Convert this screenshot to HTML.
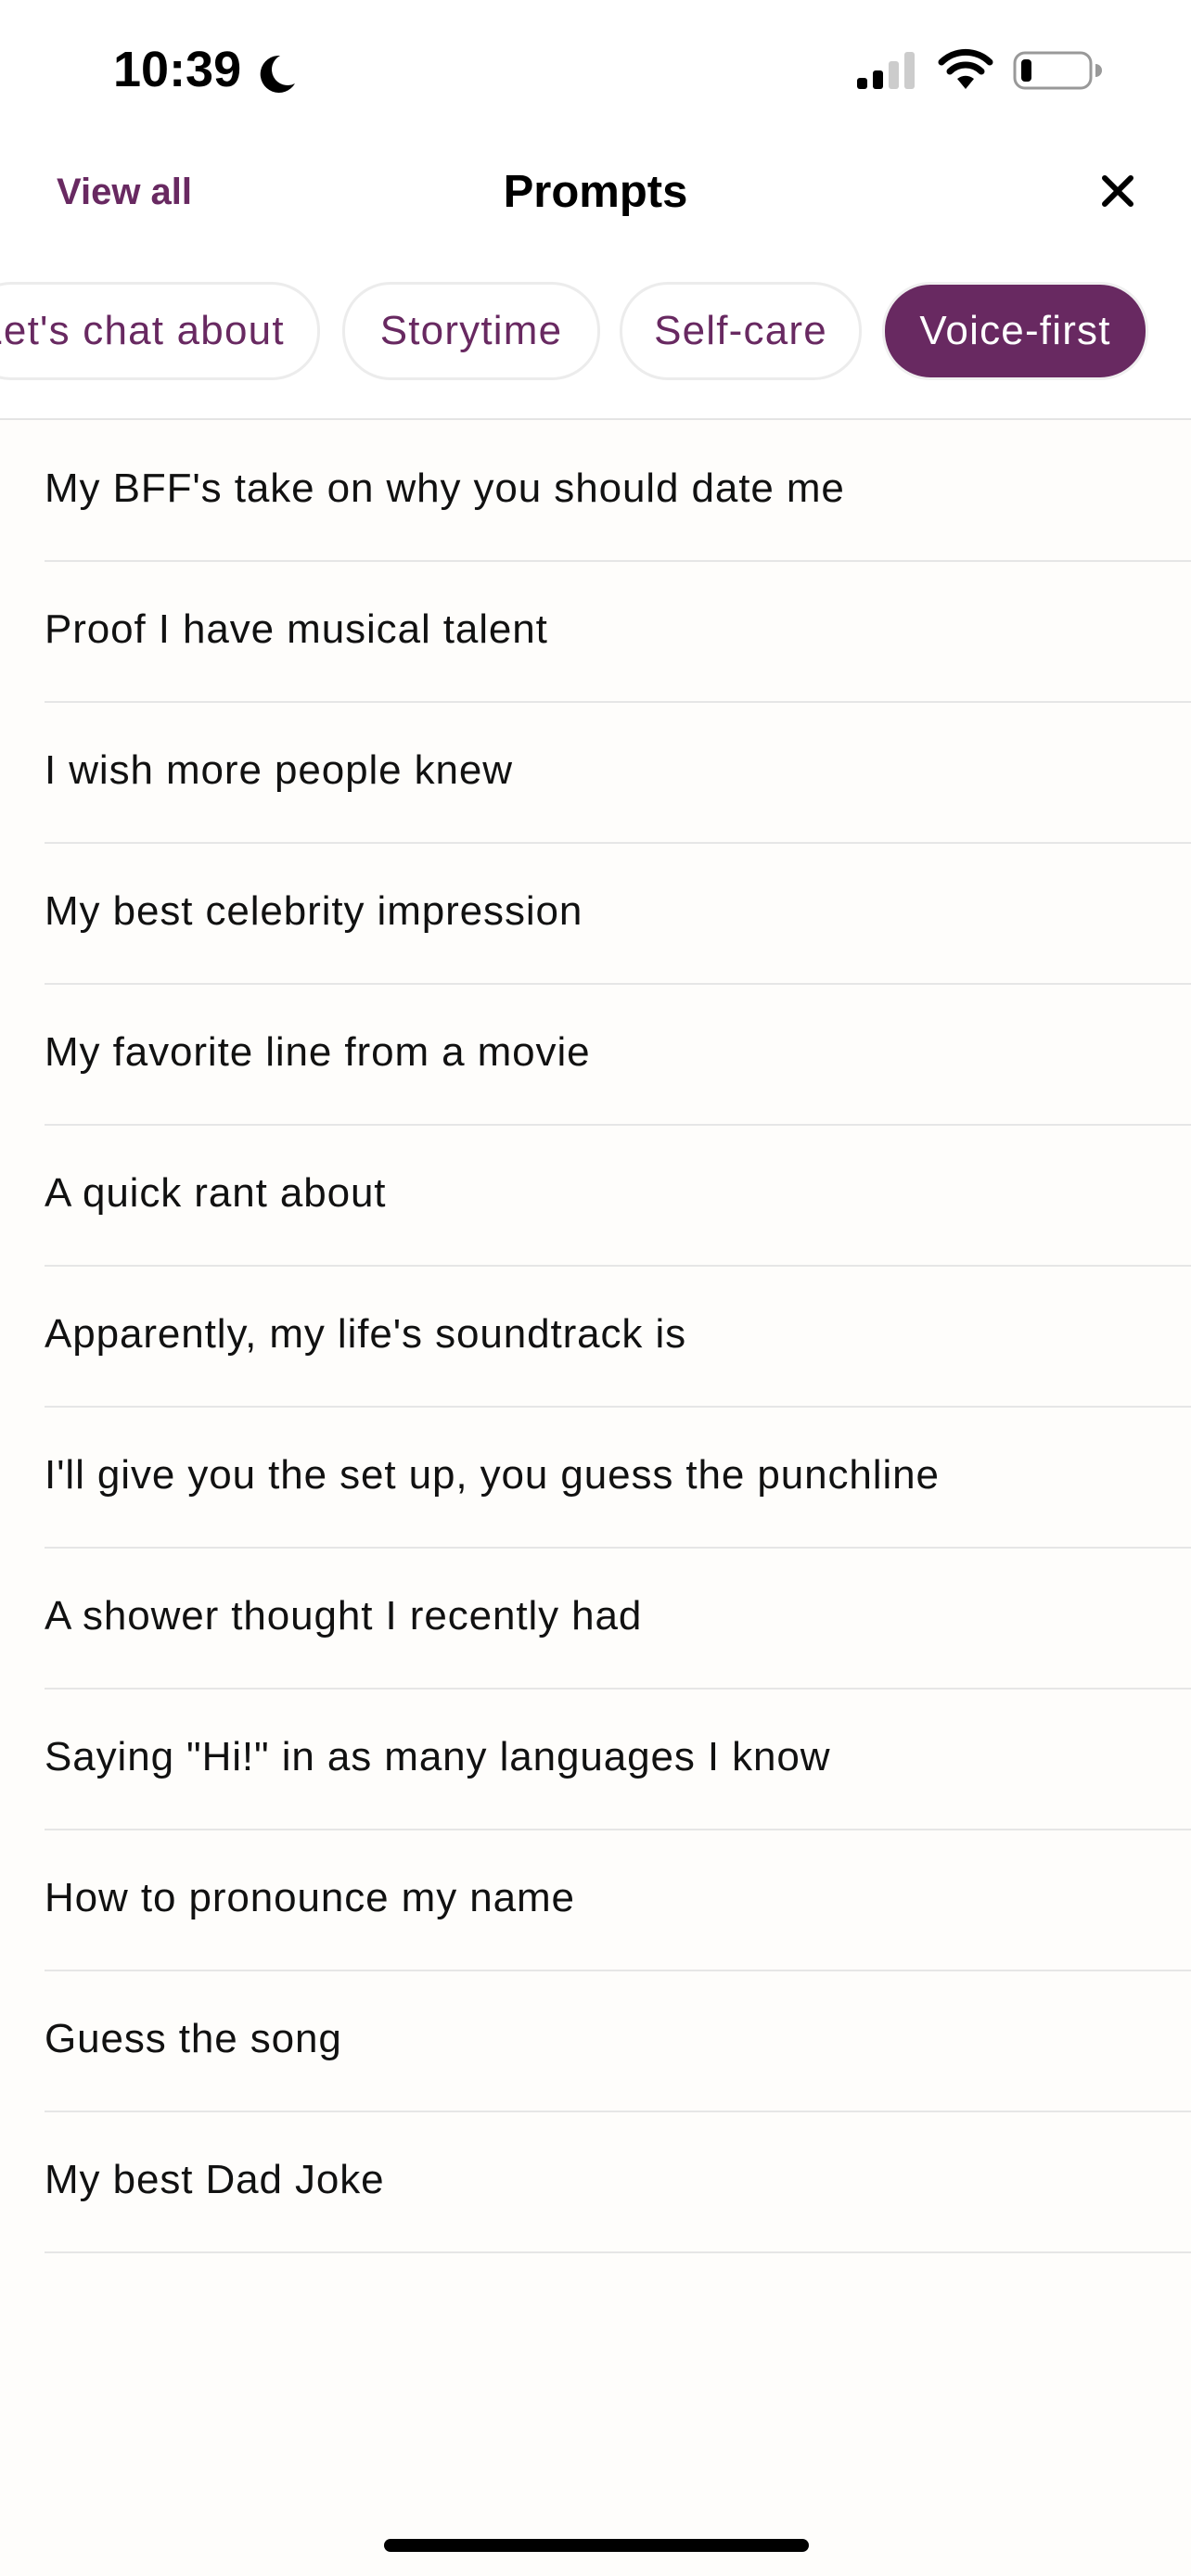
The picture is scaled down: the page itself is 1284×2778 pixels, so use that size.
<!DOCTYPE html>
<html><head><meta charset="utf-8"><style>
body{margin:0;width:1284px;height:2778px;background:#fefdfb;font-family:"Liberation Sans",sans-serif;position:relative;overflow:hidden}
.abs{position:absolute}
.chip{position:absolute;top:304px;height:100px;border:3px solid #ececec;border-radius:52px;background:#fff;color:#682961;font-size:44px;letter-spacing:1.2px;line-height:100px;text-align:center;box-sizing:content-box;white-space:nowrap}
.row{position:absolute;left:48px;right:0;height:152px;border-bottom:2px solid #e6e6e6;font-size:44px;letter-spacing:0.9px;line-height:150px;color:#111;white-space:nowrap}
</style></head><body>
<div class="abs" style="left:0;top:0;width:1284px;height:452px;background:#fff"></div>
<div class="abs" style="left:122px;top:44px;font-size:54px;font-weight:bold;color:#000">10:39</div>
<svg class="abs" style="left:274px;top:56px" width="48" height="48" viewBox="0 0 24 24"><path d="M14 2a10 10 0 1 0 8 15A8 8 0 0 1 14 2z" fill="#000"/></svg>
<svg class="abs" style="left:922px;top:54px" width="70" height="44" viewBox="0 0 70 44"><rect x="2" y="30" width="11" height="12" rx="3" fill="#000"/><rect x="19" y="22" width="11" height="20" rx="3" fill="#000"/><rect x="36" y="12" width="11" height="30" rx="3" fill="#ccc"/><rect x="53" y="2" width="11" height="40" rx="3" fill="#ccc"/></svg>
<svg class="abs" style="left:1010px;top:52px" width="62" height="46" viewBox="0 0 62 46"><path d="M31 44 L22 33 A14 14 0 0 1 40 33 Z" fill="#000"/><path d="M14 25 A24 24 0 0 1 48 25" stroke="#000" stroke-width="7" fill="none" stroke-linecap="round"/><path d="M5 15 A37 37 0 0 1 57 15" stroke="#000" stroke-width="7" fill="none" stroke-linecap="round"/></svg>
<svg class="abs" style="left:1092px;top:54px" width="96" height="44" viewBox="0 0 96 44"><rect x="2" y="3" width="82" height="38" rx="11" fill="none" stroke="#999" stroke-width="3"/><rect x="9" y="10" width="11" height="24" rx="4" fill="#000"/><path d="M89 15 a5 5 0 0 1 0 14z" fill="#999"/></svg>
<div class="abs" style="left:61px;top:185px;font-size:40px;font-weight:bold;color:#682961">View all</div>
<div class="abs" style="left:0;width:1284px;top:179px;text-align:center;font-size:49px;font-weight:bold;color:#000">Prompts</div>
<svg class="abs" style="left:1187px;top:188px" width="36" height="36" viewBox="0 0 36 36"><path d="M4 4L32 32M32 4L4 32" stroke="#000" stroke-width="6" stroke-linecap="round"/></svg>
<div class="chip" style="left:-40px;width:379px;text-indent:-20px">Let's chat about</div>
<div class="chip" style="left:369px;width:272px">Storytime</div>
<div class="chip" style="left:668px;width:255px">Self-care</div>
<div class="chip" style="left:951px;width:281px;background:#682961;border-color:#f0f0f0;color:#fff">Voice-first</div>
<div class="abs" style="left:0;top:451px;width:1284px;height:2px;background:#e4e4e4"></div>
<div class="row" style="top:452px">My BFF's take on why you should date me</div>
<div class="row" style="top:604px">Proof I have musical talent</div>
<div class="row" style="top:756px">I wish more people knew</div>
<div class="row" style="top:908px">My best celebrity impression</div>
<div class="row" style="top:1060px">My favorite line from a movie</div>
<div class="row" style="top:1212px">A quick rant about</div>
<div class="row" style="top:1364px">Apparently, my life's soundtrack is</div>
<div class="row" style="top:1516px">I'll give you the set up, you guess the punchline</div>
<div class="row" style="top:1668px">A shower thought I recently had</div>
<div class="row" style="top:1820px">Saying "Hi!" in as many languages I know</div>
<div class="row" style="top:1972px">How to pronounce my name</div>
<div class="row" style="top:2124px">Guess the song</div>
<div class="row" style="top:2276px">My best Dad Joke</div>
<div class="abs" style="left:414px;top:2738px;width:458px;height:14px;border-radius:7px;background:#000"></div>
</body></html>
